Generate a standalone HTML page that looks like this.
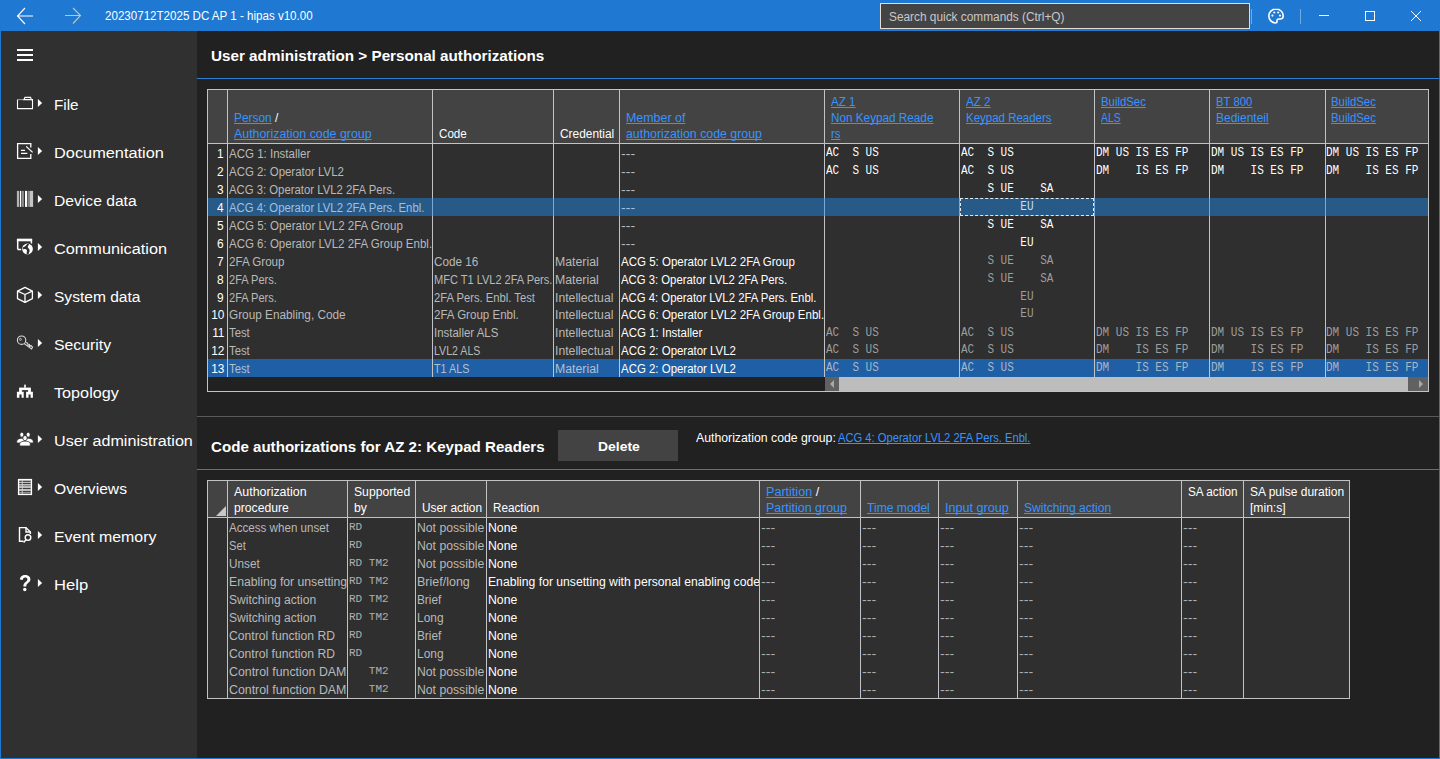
<!DOCTYPE html>
<html><head><meta charset="utf-8"><style>
html,body{margin:0;padding:0;width:1440px;height:759px;overflow:hidden;background:#212121}
body{position:relative;font-family:'Liberation Sans', sans-serif}
</style></head><body>
<div style="position:absolute;left:0;top:0;width:1440px;height:759px;background:#1f78d1"></div><div style="position:absolute;left:1px;top:31px;width:196px;height:727px;background:#303030;"></div><div style="position:absolute;left:197px;top:31px;width:1242px;height:727px;background:#212121;"></div><svg style="position:absolute;left:0;top:0" width="1440" height="31">
<g fill="none" stroke="#fff" stroke-width="1.1">
<path d="M17.5 16 H33 M25 8 L17.5 16 L25 24"/>
</g>
<g fill="none" stroke="#c9c3bb" stroke-width="1.1">
<path d="M65 15.5 H81 M73 8 L80.5 15.5 L73 23.5"/>
</g>
<line x1="1251.5" y1="9" x2="1251.5" y2="24" stroke="#6fa9e6" stroke-width="1"/>
<line x1="1300.5" y1="9" x2="1300.5" y2="24" stroke="#6fa9e6" stroke-width="1"/>
<line x1="1319" y1="15.5" x2="1329" y2="15.5" stroke="#fff" stroke-width="1"/>
<rect x="1365.5" y="11.5" width="9" height="9" fill="none" stroke="#fff" stroke-width="1"/>
<path d="M1411 11 L1421 21 M1421 11 L1411 21" stroke="#fff" stroke-width="1"/>
<g transform="translate(1268,8)">
<path d="M8 1 C3.8 1 0.8 4.2 0.8 8 C0.8 11.8 4 15 7.4 15 C8.6 15 9.2 14.3 9 13.2 C8.8 12 9.3 11 10.8 11 L12.2 11 C14 11 15.2 9.7 15.2 8 C15.2 4 12.2 1 8 1 Z" fill="none" stroke="#fff" stroke-width="1.6"/>
<circle cx="4.4" cy="7.6" r="1.1" fill="#fff"/><circle cx="6.3" cy="4.5" r="1.1" fill="#fff"/><circle cx="10.2" cy="4.5" r="1.1" fill="#fff"/><circle cx="12" cy="7.6" r="1.1" fill="#fff"/>
</g>
</svg><div style="position:absolute;top:9.00px;line-height:14px;font-family:'Liberation Sans', sans-serif;font-size:12px;font-weight:normal;color:#fff;white-space:pre;transform:scaleX(0.9646);transform-origin:left 0;left:105px;">20230712T2025 DC AP 1 - hipas v10.00</div><div style="position:absolute;left:880px;top:3px;width:370px;height:26px;background:#444444;box-sizing:border-box;border:1px solid #e2ddd3"></div><div style="position:absolute;top:10.00px;line-height:14px;font-family:'Liberation Sans', sans-serif;font-size:12px;font-weight:normal;color:#c8c8c8;white-space:pre;transform:scaleX(0.9875);transform-origin:left 0;left:889px;">Search quick commands (Ctrl+Q)</div><svg style="position:absolute;left:0;top:0" width="197" height="759"><g fill="#fff"><rect x="17" y="49" width="16" height="2"/><rect x="17" y="54" width="16" height="2"/><rect x="17" y="59" width="16" height="2"/></g><g transform="translate(12,90)"><g fill="none" stroke="#fff" stroke-width="1.1"><path d="M5.5 9.6 V18.6 H20.5 V9.6 H19.3"/><path d="M5.5 9.6 H12" stroke="#9a9a9a"/><path d="M12 9.6 L13 7.4 H18.6 L19.3 9.6 Z"/></g></g><path d="M37.9 99 L42.1 103 L37.9 107 Z" fill="#fff"/><g transform="translate(12,138)"><g fill="none" stroke="#fff" stroke-width="1.3"><path d="M18.8 9.6 V5.6 H5.6 V20.3 H18.8 V16"/><path d="M9 12.3 H13 M9 15.4 H15.3"/><path d="M14.2 8.4 L20.6 14.4"/></g></g><path d="M37.9 147 L42.1 151 L37.9 155 Z" fill="#fff"/><g transform="translate(12,186)"><g><rect x="4.9" y="4.9" width="2.2" height="16" fill="#b4b4b4"/><rect x="7.9" y="4.9" width="1.3" height="16" fill="#fff"/><rect x="9.6" y="4.9" width="2.3" height="16" fill="#8c8c8c"/><rect x="13" y="4.9" width="2.1" height="16" fill="#fff"/><rect x="15.6" y="4.9" width="2.4" height="16" fill="#858585"/><rect x="18" y="4.9" width="3.1" height="16" fill="#c4c4c4"/></g></g><path d="M37.9 195 L42.1 199 L37.9 203 Z" fill="#fff"/><g transform="translate(12,234)"><g><path d="M5.7 15.4 V5.6 H19.4 V9.5 M5.7 15.4 H9.6" fill="none" stroke="#fff" stroke-width="1.5"/><rect x="4.9" y="4.9" width="15.2" height="2.4" fill="#fff"/><circle cx="15.5" cy="15" r="6.4" fill="#303030"/><circle cx="15.5" cy="15" r="5.4" fill="#fff"/><path d="M15.2 9.7 C14.6 11.2 13.2 12.4 10.8 13.4 L10.9 15.4 C12.6 14.8 14.2 14.9 14.8 16 C15.3 17 14.4 18.6 14.6 20.3 L16.6 20.2 C16.9 18.6 17.9 17.4 17.5 15.8 C17.2 14.7 16 14.3 15.8 13.1 C15.7 12.2 16.5 11.2 17.4 10.6 Z" fill="#303030"/></g></g><path d="M37.9 243 L42.1 247 L37.9 251 Z" fill="#fff"/><g transform="translate(12,282)"><g fill="none" stroke="#fff" stroke-width="1.3" stroke-linejoin="round"><path d="M13 5.3 L20.4 9.1 V16.7 L13 20.4 L5.5 16.7 V9.1 Z"/><path d="M5.5 9.1 L13 12.5 L20.4 9.1 M13 12.5 V20.4"/></g></g><path d="M37.9 291 L42.1 295 L37.9 299 Z" fill="#fff"/><g transform="translate(12,330)"><g fill="none" stroke="#dcdcdc" stroke-width="1.1"><circle cx="9.6" cy="10.2" r="4.2"/><path d="M12.2 13.6 L19.6 19 L20.5 17.2 L19 15.6 L17.8 16.6 L17.4 14.6 L16.2 15.2 L15.6 13.2 L13.8 12.6"/><circle cx="8.4" cy="9.4" r="1" stroke-width="0.8"/></g></g><path d="M37.9 339 L42.1 343 L37.9 347 Z" fill="#fff"/><g transform="translate(12,378)"><g fill="#fff"><rect x="12.2" y="6.6" width="1.6" height="3.2"/><rect x="7.1" y="9.6" width="11.8" height="2.5"/><rect x="7.1" y="12" width="2.8" height="2"/><rect x="16.1" y="12" width="2.8" height="2"/><path d="M4.9 13.8 H11.7 V19.8 H9.6 V16.6 H7.4 V19.8 H4.9 Z"/><path d="M14.1 13.8 H20.9 V19.8 H18.6 V16.6 H16.5 V19.8 H14.1 Z"/></g></g><g transform="translate(12,426)"><g fill="#fff" stroke="#303030" stroke-width="0.8"><ellipse cx="9.8" cy="8.7" rx="2" ry="2.5"/><path d="M4.7 17 V15.4 C4.7 13.4 7 12.3 9.8 12.2 C11.6 12.2 12.6 12.6 13.2 13.3 V17 Z"/><ellipse cx="16.2" cy="8.7" rx="2" ry="2.5"/><path d="M21.3 17 V15.4 C21.3 13.4 19 12.3 16.2 12.2 C14.4 12.2 13.4 12.6 12.8 13.3 V17 Z"/><path d="M7.7 20 V17.8 C7.7 16.1 10.1 15.1 13 15.1 C15.9 15.1 18.3 16.1 18.3 17.8 V20 Z"/><ellipse cx="13" cy="12.1" rx="2.2" ry="2.6"/></g></g><path d="M37.9 435 L42.1 439 L37.9 443 Z" fill="#fff"/><g transform="translate(12,474)"><g><rect x="6.5" y="5.5" width="13" height="15" fill="#bdbdbd" stroke="#fff" stroke-width="1.2"/><g fill="#303030"><rect x="7.4" y="6.9" width="11.2" height="0.9"/><rect x="7.4" y="9.1" width="11.2" height="0.9"/><rect x="7.4" y="11.4" width="11.2" height="0.7" opacity="0.6"/><rect x="7.4" y="14" width="11.2" height="0.9"/><rect x="7.4" y="17.1" width="11.2" height="0.9"/><rect x="7.4" y="18.7" width="11.2" height="0.8"/></g><rect x="9.8" y="6" width="0.9" height="14" fill="#d0d0d0"/></g></g><path d="M37.9 483 L42.1 487 L37.9 491 Z" fill="#fff"/><g transform="translate(12,522)"><g fill="none" stroke="#fff" stroke-width="1.4"><path d="M11.5 19.2 H7.5 V5.6 H14 L18.4 10 V12"/><path d="M14 5.6 V10 H18.4"/><circle cx="16" cy="15.6" r="2.8"/><path d="M14 17.8 L11.6 20.4" stroke-width="1.5"/></g></g><path d="M37.9 531 L42.1 535 L37.9 539 Z" fill="#fff"/><g transform="translate(12,570)"><g fill="#fff"><path d="M7.9 9.6 C7.9 6.6 10.2 4.9 13.1 4.9 C16.2 4.9 18.4 6.6 18.4 9.3 C18.4 11.4 17 12.4 15.6 13.4 C14.6 14.1 14.3 14.8 14.3 16.4 H11.4 C11.4 14.3 11.9 13.1 13.5 11.9 C14.7 11 15.4 10.5 15.4 9.4 C15.4 8.2 14.5 7.6 13.1 7.6 C11.7 7.6 10.9 8.5 10.8 9.9 Z"/><circle cx="12.8" cy="19.5" r="1.7"/></g></g><path d="M37.9 579 L42.1 583 L37.9 587 Z" fill="#fff"/></svg><div style="position:absolute;top:96.00px;line-height:17px;font-family:'Liberation Sans', sans-serif;font-size:15.4px;font-weight:normal;color:#fff;white-space:pre;transform:scaleX(0.9914);transform-origin:left 0;left:54px;">File</div><div style="position:absolute;top:144.00px;line-height:17px;font-family:'Liberation Sans', sans-serif;font-size:15.4px;font-weight:normal;color:#fff;white-space:pre;transform:scaleX(1.0620);transform-origin:left 0;left:54px;">Documentation</div><div style="position:absolute;top:192.00px;line-height:17px;font-family:'Liberation Sans', sans-serif;font-size:15.4px;font-weight:normal;color:#fff;white-space:pre;transform:scaleX(1.0169);transform-origin:left 0;left:54px;">Device data</div><div style="position:absolute;top:240.00px;line-height:17px;font-family:'Liberation Sans', sans-serif;font-size:15.4px;font-weight:normal;color:#fff;white-space:pre;transform:scaleX(1.0571);transform-origin:left 0;left:54px;">Communication</div><div style="position:absolute;top:288.00px;line-height:17px;font-family:'Liberation Sans', sans-serif;font-size:15.4px;font-weight:normal;color:#fff;white-space:pre;transform:scaleX(1.0106);transform-origin:left 0;left:54px;">System data</div><div style="position:absolute;top:336.00px;line-height:17px;font-family:'Liberation Sans', sans-serif;font-size:15.4px;font-weight:normal;color:#fff;white-space:pre;transform:scaleX(1.0282);transform-origin:left 0;left:54px;">Security</div><div style="position:absolute;top:384.00px;line-height:17px;font-family:'Liberation Sans', sans-serif;font-size:15.4px;font-weight:normal;color:#fff;white-space:pre;transform:scaleX(1.0528);transform-origin:left 0;left:54px;">Topology</div><div style="position:absolute;top:432.00px;line-height:17px;font-family:'Liberation Sans', sans-serif;font-size:15.4px;font-weight:normal;color:#fff;white-space:pre;transform:scaleX(1.0470);transform-origin:left 0;left:54px;">User administration</div><div style="position:absolute;top:480.00px;line-height:17px;font-family:'Liberation Sans', sans-serif;font-size:15.4px;font-weight:normal;color:#fff;white-space:pre;transform:scaleX(1.0156);transform-origin:left 0;left:54px;">Overviews</div><div style="position:absolute;top:528.00px;line-height:17px;font-family:'Liberation Sans', sans-serif;font-size:15.4px;font-weight:normal;color:#fff;white-space:pre;transform:scaleX(1.0325);transform-origin:left 0;left:54px;">Event memory</div><div style="position:absolute;top:576.00px;line-height:17px;font-family:'Liberation Sans', sans-serif;font-size:15.4px;font-weight:normal;color:#fff;white-space:pre;transform:scaleX(1.0798);transform-origin:left 0;left:54px;">Help</div><div style="position:absolute;top:47.00px;line-height:17px;font-family:'Liberation Sans', sans-serif;font-size:15.2px;font-weight:bold;color:#fff;white-space:pre;transform:scaleX(1.0034);transform-origin:left 0;left:211px;">User administration &gt; Personal authorizations</div><div style="position:absolute;left:197px;top:78px;width:1242px;height:1px;background:#2d7dd2;"></div><div style="position:absolute;left:207px;top:89px;width:1222px;height:303px;background:#c3c3c3;"></div><div style="position:absolute;left:208px;top:90px;width:1220px;height:53px;background:#434343;"></div><div style="position:absolute;left:208px;top:144px;width:1220px;height:233px;background:#2f2f2f;"></div><div style="position:absolute;left:208px;top:377px;width:617px;height:14px;background:#212121;"></div><div style="position:absolute;left:839px;top:377px;width:569px;height:14px;background:#bdbdbd;"></div><div style="position:absolute;left:825px;top:377px;width:14px;height:14px;background:#616161;"></div><div style="position:absolute;left:1408px;top:377px;width:20px;height:14px;background:#616161;"></div><svg style="position:absolute;left:825px;top:377px" width="14" height="14"><path d="M9 3 L5 7 L9 11 Z" fill="#a9a9a9"/></svg><svg style="position:absolute;left:1408px;top:377px" width="20" height="14"><path d="M11 3 L15 7 L11 11 Z" fill="#a9a9a9"/></svg><div style="position:absolute;left:208px;top:198px;width:1220px;height:18px;background:#285a87;"></div><div style="position:absolute;left:208px;top:359px;width:1220px;height:18px;background:#1f5fa6;"></div><div style="position:absolute;left:227px;top:90px;width:1px;height:287px;background:#c3c3c3;"></div><div style="position:absolute;left:432px;top:90px;width:1px;height:287px;background:#c3c3c3;"></div><div style="position:absolute;left:553px;top:90px;width:1px;height:287px;background:#c3c3c3;"></div><div style="position:absolute;left:619px;top:90px;width:1px;height:287px;background:#c3c3c3;"></div><div style="position:absolute;left:824px;top:90px;width:1px;height:287px;background:#c3c3c3;"></div><div style="position:absolute;left:959px;top:90px;width:1px;height:287px;background:#c3c3c3;"></div><div style="position:absolute;left:1094px;top:90px;width:1px;height:287px;background:#c3c3c3;"></div><div style="position:absolute;left:1209px;top:90px;width:1px;height:287px;background:#c3c3c3;"></div><div style="position:absolute;left:1325px;top:90px;width:1px;height:287px;background:#c3c3c3;"></div><div style="position:absolute;left:227px;top:198px;width:1px;height:18px;background:#78a9dc;"></div><div style="position:absolute;left:432px;top:198px;width:1px;height:18px;background:#78a9dc;"></div><div style="position:absolute;left:553px;top:198px;width:1px;height:18px;background:#78a9dc;"></div><div style="position:absolute;left:619px;top:198px;width:1px;height:18px;background:#78a9dc;"></div><div style="position:absolute;left:824px;top:198px;width:1px;height:18px;background:#78a9dc;"></div><div style="position:absolute;left:959px;top:198px;width:1px;height:18px;background:#78a9dc;"></div><div style="position:absolute;left:1094px;top:198px;width:1px;height:18px;background:#78a9dc;"></div><div style="position:absolute;left:1209px;top:198px;width:1px;height:18px;background:#78a9dc;"></div><div style="position:absolute;left:1325px;top:198px;width:1px;height:18px;background:#78a9dc;"></div><div style="position:absolute;left:960px;top:198px;width:134px;height:18px;box-sizing:border-box;border:1px dashed #e8e8e8"></div><div style="position:absolute;top:111.00px;line-height:14px;font-family:'Liberation Sans', sans-serif;font-size:12px;font-weight:normal;color:#fff;white-space:pre;transform:scaleX(0.9911);transform-origin:left 0;left:234px;"><span style="color:#3794ff;text-decoration:underline;text-decoration-skip-ink:none;text-underline-offset:1px">Person</span> /</div><div style="position:absolute;top:127.00px;line-height:14px;font-family:'Liberation Sans', sans-serif;font-size:12px;font-weight:normal;color:#fff;white-space:pre;transform:scaleX(1.0310);transform-origin:left 0;left:234px;"><span style="color:#3794ff;text-decoration:underline;text-decoration-skip-ink:none;text-underline-offset:1px">Authorization code group</span></div><div style="position:absolute;top:127.00px;line-height:14px;font-family:'Liberation Sans', sans-serif;font-size:12px;font-weight:normal;color:#fff;white-space:pre;transform:scaleX(0.9667);transform-origin:left 0;left:439px;">Code</div><div style="position:absolute;top:127.00px;line-height:14px;font-family:'Liberation Sans', sans-serif;font-size:12px;font-weight:normal;color:#fff;white-space:pre;transform:scaleX(0.9910);transform-origin:left 0;left:560px;">Credential</div><div style="position:absolute;top:111.00px;line-height:14px;font-family:'Liberation Sans', sans-serif;font-size:12px;font-weight:normal;color:#fff;white-space:pre;transform:scaleX(1.0349);transform-origin:left 0;left:626px;"><span style="color:#3794ff;text-decoration:underline;text-decoration-skip-ink:none;text-underline-offset:1px">Member of</span></div><div style="position:absolute;top:127.00px;line-height:14px;font-family:'Liberation Sans', sans-serif;font-size:12px;font-weight:normal;color:#fff;white-space:pre;transform:scaleX(1.0293);transform-origin:left 0;left:626px;"><span style="color:#3794ff;text-decoration:underline;text-decoration-skip-ink:none;text-underline-offset:1px">authorization code group</span></div><div style="position:absolute;top:95.00px;line-height:14px;font-family:'Liberation Sans', sans-serif;font-size:12px;font-weight:normal;color:#fff;white-space:pre;transform:scaleX(0.9693);transform-origin:left 0;left:831px;"><span style="color:#3794ff;text-decoration:underline;text-decoration-skip-ink:none;text-underline-offset:1px">AZ 1</span></div><div style="position:absolute;top:111.00px;line-height:14px;font-family:'Liberation Sans', sans-serif;font-size:12px;font-weight:normal;color:#fff;white-space:pre;transform:scaleX(0.9779);transform-origin:left 0;left:831px;"><span style="color:#3794ff;text-decoration:underline;text-decoration-skip-ink:none;text-underline-offset:1px">Non Keypad Reade</span></div><div style="position:absolute;top:127.00px;line-height:14px;font-family:'Liberation Sans', sans-serif;font-size:12px;font-weight:normal;color:#fff;white-space:pre;transform:scaleX(0.9388);transform-origin:left 0;left:831px;"><span style="color:#3794ff;text-decoration:underline;text-decoration-skip-ink:none;text-underline-offset:1px">rs</span></div><div style="position:absolute;top:95.00px;line-height:14px;font-family:'Liberation Sans', sans-serif;font-size:12px;font-weight:normal;color:#fff;white-space:pre;transform:scaleX(0.9693);transform-origin:left 0;left:966px;"><span style="color:#3794ff;text-decoration:underline;text-decoration-skip-ink:none;text-underline-offset:1px">AZ 2</span></div><div style="position:absolute;top:111.00px;line-height:14px;font-family:'Liberation Sans', sans-serif;font-size:12px;font-weight:normal;color:#fff;white-space:pre;transform:scaleX(0.9573);transform-origin:left 0;left:966px;"><span style="color:#3794ff;text-decoration:underline;text-decoration-skip-ink:none;text-underline-offset:1px">Keypad Readers</span></div><div style="position:absolute;top:95.00px;line-height:14px;font-family:'Liberation Sans', sans-serif;font-size:12px;font-weight:normal;color:#fff;white-space:pre;transform:scaleX(0.9461);transform-origin:left 0;left:1101px;"><span style="color:#3794ff;text-decoration:underline;text-decoration-skip-ink:none;text-underline-offset:1px">BuildSec</span></div><div style="position:absolute;top:111.00px;line-height:14px;font-family:'Liberation Sans', sans-serif;font-size:12px;font-weight:normal;color:#fff;white-space:pre;transform:scaleX(0.8640);transform-origin:left 0;left:1101px;"><span style="color:#3794ff;text-decoration:underline;text-decoration-skip-ink:none;text-underline-offset:1px">ALS</span></div><div style="position:absolute;top:95.00px;line-height:14px;font-family:'Liberation Sans', sans-serif;font-size:12px;font-weight:normal;color:#fff;white-space:pre;transform:scaleX(0.9417);transform-origin:left 0;left:1216px;"><span style="color:#3794ff;text-decoration:underline;text-decoration-skip-ink:none;text-underline-offset:1px">BT 800</span></div><div style="position:absolute;top:111.00px;line-height:14px;font-family:'Liberation Sans', sans-serif;font-size:12px;font-weight:normal;color:#fff;white-space:pre;left:1216px;"><span style="color:#3794ff;text-decoration:underline;text-decoration-skip-ink:none;text-underline-offset:1px">Bedienteil</span></div><div style="position:absolute;top:95.00px;line-height:14px;font-family:'Liberation Sans', sans-serif;font-size:12px;font-weight:normal;color:#fff;white-space:pre;transform:scaleX(0.9461);transform-origin:left 0;left:1331px;"><span style="color:#3794ff;text-decoration:underline;text-decoration-skip-ink:none;text-underline-offset:1px">BuildSec</span></div><div style="position:absolute;top:111.00px;line-height:14px;font-family:'Liberation Sans', sans-serif;font-size:12px;font-weight:normal;color:#fff;white-space:pre;transform:scaleX(0.9461);transform-origin:left 0;left:1331px;"><span style="color:#3794ff;text-decoration:underline;text-decoration-skip-ink:none;text-underline-offset:1px">BuildSec</span></div><div style="position:absolute;top:147.00px;line-height:14px;font-family:'Liberation Sans', sans-serif;font-size:12px;font-weight:normal;color:#fff;white-space:pre;transform:scaleX(0.9889);transform-origin:right 0;right:1216px;">1</div><div style="position:absolute;left:228px;top:0;width:204px;height:759px;overflow:hidden"><div style="position:absolute;top:147.00px;line-height:14px;font-family:'Liberation Sans', sans-serif;font-size:12px;font-weight:normal;color:#b9b9b9;white-space:pre;transform:scaleX(0.9596);transform-origin:left 0;left:1px;">ACG 1: Installer</div></div><div style="position:absolute;left:433px;top:0;width:120px;height:759px;overflow:hidden"><div style="position:absolute;top:147.00px;line-height:14px;font-family:'Liberation Sans', sans-serif;font-size:12px;font-weight:normal;color:#b9b9b9;white-space:pre;left:1px;"></div></div><div style="position:absolute;left:554px;top:0;width:65px;height:759px;overflow:hidden"><div style="position:absolute;top:147.00px;line-height:14px;font-family:'Liberation Sans', sans-serif;font-size:12px;font-weight:normal;color:#b9b9b9;white-space:pre;left:1px;"></div></div><div style="position:absolute;top:147.00px;line-height:14px;font-family:'Liberation Sans', sans-serif;font-size:12px;font-weight:normal;color:#b9b9b9;white-space:pre;transform:scaleX(1.1862);transform-origin:left 0;left:621px;">---</div><div style="position:absolute;top:146.00px;line-height:14px;font-family:'Liberation Mono', monospace;font-size:11.9px;font-weight:normal;color:#ffffff;white-space:pre;transform:scaleX(0.9244);transform-origin:left 0;left:826px;">AC  S US</div><div style="position:absolute;top:146.00px;line-height:14px;font-family:'Liberation Mono', monospace;font-size:11.9px;font-weight:normal;color:#ffffff;white-space:pre;transform:scaleX(0.9244);transform-origin:left 0;left:961px;">AC  S US</div><div style="position:absolute;top:146.00px;line-height:14px;font-family:'Liberation Mono', monospace;font-size:11.9px;font-weight:normal;color:#ffffff;white-space:pre;transform:scaleX(0.9244);transform-origin:left 0;left:1096px;">DM US IS ES FP</div><div style="position:absolute;top:146.00px;line-height:14px;font-family:'Liberation Mono', monospace;font-size:11.9px;font-weight:normal;color:#ffffff;white-space:pre;transform:scaleX(0.9244);transform-origin:left 0;left:1211px;">DM US IS ES FP</div><div style="position:absolute;top:146.00px;line-height:14px;font-family:'Liberation Mono', monospace;font-size:11.9px;font-weight:normal;color:#ffffff;white-space:pre;transform:scaleX(0.9244);transform-origin:left 0;left:1326px;">DM US IS ES FP</div><div style="position:absolute;top:165.00px;line-height:14px;font-family:'Liberation Sans', sans-serif;font-size:12px;font-weight:normal;color:#fff;white-space:pre;transform:scaleX(0.9889);transform-origin:right 0;right:1216px;">2</div><div style="position:absolute;left:228px;top:0;width:204px;height:759px;overflow:hidden"><div style="position:absolute;top:165.00px;line-height:14px;font-family:'Liberation Sans', sans-serif;font-size:12px;font-weight:normal;color:#b9b9b9;white-space:pre;transform:scaleX(0.9541);transform-origin:left 0;left:1px;">ACG 2: Operator LVL2</div></div><div style="position:absolute;left:433px;top:0;width:120px;height:759px;overflow:hidden"><div style="position:absolute;top:165.00px;line-height:14px;font-family:'Liberation Sans', sans-serif;font-size:12px;font-weight:normal;color:#b9b9b9;white-space:pre;left:1px;"></div></div><div style="position:absolute;left:554px;top:0;width:65px;height:759px;overflow:hidden"><div style="position:absolute;top:165.00px;line-height:14px;font-family:'Liberation Sans', sans-serif;font-size:12px;font-weight:normal;color:#b9b9b9;white-space:pre;left:1px;"></div></div><div style="position:absolute;top:165.00px;line-height:14px;font-family:'Liberation Sans', sans-serif;font-size:12px;font-weight:normal;color:#b9b9b9;white-space:pre;transform:scaleX(1.1862);transform-origin:left 0;left:621px;">---</div><div style="position:absolute;top:164.00px;line-height:14px;font-family:'Liberation Mono', monospace;font-size:11.9px;font-weight:normal;color:#ffffff;white-space:pre;transform:scaleX(0.9244);transform-origin:left 0;left:826px;">AC  S US</div><div style="position:absolute;top:164.00px;line-height:14px;font-family:'Liberation Mono', monospace;font-size:11.9px;font-weight:normal;color:#ffffff;white-space:pre;transform:scaleX(0.9244);transform-origin:left 0;left:961px;">AC  S US</div><div style="position:absolute;top:164.00px;line-height:14px;font-family:'Liberation Mono', monospace;font-size:11.9px;font-weight:normal;color:#ffffff;white-space:pre;transform:scaleX(0.9244);transform-origin:left 0;left:1096px;">DM    IS ES FP</div><div style="position:absolute;top:164.00px;line-height:14px;font-family:'Liberation Mono', monospace;font-size:11.9px;font-weight:normal;color:#ffffff;white-space:pre;transform:scaleX(0.9244);transform-origin:left 0;left:1211px;">DM    IS ES FP</div><div style="position:absolute;top:164.00px;line-height:14px;font-family:'Liberation Mono', monospace;font-size:11.9px;font-weight:normal;color:#ffffff;white-space:pre;transform:scaleX(0.9244);transform-origin:left 0;left:1326px;">DM    IS ES FP</div><div style="position:absolute;top:183.00px;line-height:14px;font-family:'Liberation Sans', sans-serif;font-size:12px;font-weight:normal;color:#fff;white-space:pre;transform:scaleX(0.9889);transform-origin:right 0;right:1216px;">3</div><div style="position:absolute;left:228px;top:0;width:204px;height:759px;overflow:hidden"><div style="position:absolute;top:183.00px;line-height:14px;font-family:'Liberation Sans', sans-serif;font-size:12px;font-weight:normal;color:#b9b9b9;white-space:pre;transform:scaleX(0.9444);transform-origin:left 0;left:1px;">ACG 3: Operator LVL2 2FA Pers.</div></div><div style="position:absolute;left:433px;top:0;width:120px;height:759px;overflow:hidden"><div style="position:absolute;top:183.00px;line-height:14px;font-family:'Liberation Sans', sans-serif;font-size:12px;font-weight:normal;color:#b9b9b9;white-space:pre;left:1px;"></div></div><div style="position:absolute;left:554px;top:0;width:65px;height:759px;overflow:hidden"><div style="position:absolute;top:183.00px;line-height:14px;font-family:'Liberation Sans', sans-serif;font-size:12px;font-weight:normal;color:#b9b9b9;white-space:pre;left:1px;"></div></div><div style="position:absolute;top:183.00px;line-height:14px;font-family:'Liberation Sans', sans-serif;font-size:12px;font-weight:normal;color:#b9b9b9;white-space:pre;transform:scaleX(1.1862);transform-origin:left 0;left:621px;">---</div><div style="position:absolute;top:182.00px;line-height:14px;font-family:'Liberation Mono', monospace;font-size:11.9px;font-weight:normal;color:#ffffff;white-space:pre;transform:scaleX(0.9244);transform-origin:left 0;left:961px;">    S UE    SA</div><div style="position:absolute;top:201.00px;line-height:14px;font-family:'Liberation Sans', sans-serif;font-size:12px;font-weight:normal;color:#fff;white-space:pre;transform:scaleX(0.9889);transform-origin:right 0;right:1216px;">4</div><div style="position:absolute;left:228px;top:0;width:204px;height:759px;overflow:hidden"><div style="position:absolute;top:201.00px;line-height:14px;font-family:'Liberation Sans', sans-serif;font-size:12px;font-weight:normal;color:#9cc0e4;white-space:pre;transform:scaleX(0.9459);transform-origin:left 0;left:1px;">ACG 4: Operator LVL2 2FA Pers. Enbl.</div></div><div style="position:absolute;left:433px;top:0;width:120px;height:759px;overflow:hidden"><div style="position:absolute;top:201.00px;line-height:14px;font-family:'Liberation Sans', sans-serif;font-size:12px;font-weight:normal;color:#9cc0e4;white-space:pre;left:1px;"></div></div><div style="position:absolute;left:554px;top:0;width:65px;height:759px;overflow:hidden"><div style="position:absolute;top:201.00px;line-height:14px;font-family:'Liberation Sans', sans-serif;font-size:12px;font-weight:normal;color:#9cc0e4;white-space:pre;left:1px;"></div></div><div style="position:absolute;top:201.00px;line-height:14px;font-family:'Liberation Sans', sans-serif;font-size:12px;font-weight:normal;color:#9cc0e4;white-space:pre;transform:scaleX(1.1862);transform-origin:left 0;left:621px;">---</div><div style="position:absolute;top:200.00px;line-height:14px;font-family:'Liberation Mono', monospace;font-size:11.9px;font-weight:normal;color:#c8dcf0;white-space:pre;transform:scaleX(0.9244);transform-origin:left 0;left:961px;">         EU</div><div style="position:absolute;top:219.00px;line-height:14px;font-family:'Liberation Sans', sans-serif;font-size:12px;font-weight:normal;color:#fff;white-space:pre;transform:scaleX(0.9889);transform-origin:right 0;right:1216px;">5</div><div style="position:absolute;left:228px;top:0;width:204px;height:759px;overflow:hidden"><div style="position:absolute;top:219.00px;line-height:14px;font-family:'Liberation Sans', sans-serif;font-size:12px;font-weight:normal;color:#b9b9b9;white-space:pre;transform:scaleX(0.9590);transform-origin:left 0;left:1px;">ACG 5: Operator LVL2 2FA Group</div></div><div style="position:absolute;left:433px;top:0;width:120px;height:759px;overflow:hidden"><div style="position:absolute;top:219.00px;line-height:14px;font-family:'Liberation Sans', sans-serif;font-size:12px;font-weight:normal;color:#b9b9b9;white-space:pre;left:1px;"></div></div><div style="position:absolute;left:554px;top:0;width:65px;height:759px;overflow:hidden"><div style="position:absolute;top:219.00px;line-height:14px;font-family:'Liberation Sans', sans-serif;font-size:12px;font-weight:normal;color:#b9b9b9;white-space:pre;left:1px;"></div></div><div style="position:absolute;top:219.00px;line-height:14px;font-family:'Liberation Sans', sans-serif;font-size:12px;font-weight:normal;color:#b9b9b9;white-space:pre;transform:scaleX(1.1862);transform-origin:left 0;left:621px;">---</div><div style="position:absolute;top:218.00px;line-height:14px;font-family:'Liberation Mono', monospace;font-size:11.9px;font-weight:normal;color:#ffffff;white-space:pre;transform:scaleX(0.9244);transform-origin:left 0;left:961px;">    S UE    SA</div><div style="position:absolute;top:237.00px;line-height:14px;font-family:'Liberation Sans', sans-serif;font-size:12px;font-weight:normal;color:#fff;white-space:pre;transform:scaleX(0.9889);transform-origin:right 0;right:1216px;">6</div><div style="position:absolute;left:228px;top:0;width:204px;height:759px;overflow:hidden"><div style="position:absolute;top:237.00px;line-height:14px;font-family:'Liberation Sans', sans-serif;font-size:12px;font-weight:normal;color:#b9b9b9;white-space:pre;transform:scaleX(0.9584);transform-origin:left 0;left:1px;">ACG 6: Operator LVL2 2FA Group Enbl.</div></div><div style="position:absolute;left:433px;top:0;width:120px;height:759px;overflow:hidden"><div style="position:absolute;top:237.00px;line-height:14px;font-family:'Liberation Sans', sans-serif;font-size:12px;font-weight:normal;color:#b9b9b9;white-space:pre;left:1px;"></div></div><div style="position:absolute;left:554px;top:0;width:65px;height:759px;overflow:hidden"><div style="position:absolute;top:237.00px;line-height:14px;font-family:'Liberation Sans', sans-serif;font-size:12px;font-weight:normal;color:#b9b9b9;white-space:pre;left:1px;"></div></div><div style="position:absolute;top:237.00px;line-height:14px;font-family:'Liberation Sans', sans-serif;font-size:12px;font-weight:normal;color:#b9b9b9;white-space:pre;transform:scaleX(1.1862);transform-origin:left 0;left:621px;">---</div><div style="position:absolute;top:236.00px;line-height:14px;font-family:'Liberation Mono', monospace;font-size:11.9px;font-weight:normal;color:#ffffff;white-space:pre;transform:scaleX(0.9244);transform-origin:left 0;left:961px;">         EU</div><div style="position:absolute;top:255.00px;line-height:14px;font-family:'Liberation Sans', sans-serif;font-size:12px;font-weight:normal;color:#fff;white-space:pre;transform:scaleX(0.9889);transform-origin:right 0;right:1216px;">7</div><div style="position:absolute;left:228px;top:0;width:204px;height:759px;overflow:hidden"><div style="position:absolute;top:255.00px;line-height:14px;font-family:'Liberation Sans', sans-serif;font-size:12px;font-weight:normal;color:#b9b9b9;white-space:pre;transform:scaleX(0.9677);transform-origin:left 0;left:1px;">2FA Group</div></div><div style="position:absolute;left:433px;top:0;width:120px;height:759px;overflow:hidden"><div style="position:absolute;top:255.00px;line-height:14px;font-family:'Liberation Sans', sans-serif;font-size:12px;font-weight:normal;color:#b9b9b9;white-space:pre;transform:scaleX(0.9747);transform-origin:left 0;left:1px;">Code 16</div></div><div style="position:absolute;left:554px;top:0;width:65px;height:759px;overflow:hidden"><div style="position:absolute;top:255.00px;line-height:14px;font-family:'Liberation Sans', sans-serif;font-size:12px;font-weight:normal;color:#b9b9b9;white-space:pre;transform:scaleX(1.0240);transform-origin:left 0;left:1px;">Material</div></div><div style="position:absolute;left:620px;top:0;width:204px;height:759px;overflow:hidden"><div style="position:absolute;top:255.00px;line-height:14px;font-family:'Liberation Sans', sans-serif;font-size:12px;font-weight:normal;color:#fff;white-space:pre;transform:scaleX(0.9590);transform-origin:left 0;left:1px;">ACG 5: Operator LVL2 2FA Group</div></div><div style="position:absolute;top:254.00px;line-height:14px;font-family:'Liberation Mono', monospace;font-size:11.9px;font-weight:normal;color:#9e9e9e;white-space:pre;transform:scaleX(0.9244);transform-origin:left 0;left:961px;">    S UE    SA</div><div style="position:absolute;top:273.00px;line-height:14px;font-family:'Liberation Sans', sans-serif;font-size:12px;font-weight:normal;color:#fff;white-space:pre;transform:scaleX(0.9889);transform-origin:right 0;right:1216px;">8</div><div style="position:absolute;left:228px;top:0;width:204px;height:759px;overflow:hidden"><div style="position:absolute;top:273.00px;line-height:14px;font-family:'Liberation Sans', sans-serif;font-size:12px;font-weight:normal;color:#b9b9b9;white-space:pre;transform:scaleX(0.9197);transform-origin:left 0;left:1px;">2FA Pers.</div></div><div style="position:absolute;left:433px;top:0;width:120px;height:759px;overflow:hidden"><div style="position:absolute;top:273.00px;line-height:14px;font-family:'Liberation Sans', sans-serif;font-size:12px;font-weight:normal;color:#b9b9b9;white-space:pre;transform:scaleX(0.9178);transform-origin:left 0;left:1px;">MFC T1 LVL2 2FA Pers.</div></div><div style="position:absolute;left:554px;top:0;width:65px;height:759px;overflow:hidden"><div style="position:absolute;top:273.00px;line-height:14px;font-family:'Liberation Sans', sans-serif;font-size:12px;font-weight:normal;color:#b9b9b9;white-space:pre;transform:scaleX(1.0240);transform-origin:left 0;left:1px;">Material</div></div><div style="position:absolute;left:620px;top:0;width:204px;height:759px;overflow:hidden"><div style="position:absolute;top:273.00px;line-height:14px;font-family:'Liberation Sans', sans-serif;font-size:12px;font-weight:normal;color:#fff;white-space:pre;transform:scaleX(0.9444);transform-origin:left 0;left:1px;">ACG 3: Operator LVL2 2FA Pers.</div></div><div style="position:absolute;top:272.00px;line-height:14px;font-family:'Liberation Mono', monospace;font-size:11.9px;font-weight:normal;color:#9e9e9e;white-space:pre;transform:scaleX(0.9244);transform-origin:left 0;left:961px;">    S UE    SA</div><div style="position:absolute;top:291.00px;line-height:14px;font-family:'Liberation Sans', sans-serif;font-size:12px;font-weight:normal;color:#fff;white-space:pre;transform:scaleX(0.9889);transform-origin:right 0;right:1216px;">9</div><div style="position:absolute;left:228px;top:0;width:204px;height:759px;overflow:hidden"><div style="position:absolute;top:291.00px;line-height:14px;font-family:'Liberation Sans', sans-serif;font-size:12px;font-weight:normal;color:#b9b9b9;white-space:pre;transform:scaleX(0.9197);transform-origin:left 0;left:1px;">2FA Pers.</div></div><div style="position:absolute;left:433px;top:0;width:120px;height:759px;overflow:hidden"><div style="position:absolute;top:291.00px;line-height:14px;font-family:'Liberation Sans', sans-serif;font-size:12px;font-weight:normal;color:#b9b9b9;white-space:pre;transform:scaleX(0.9364);transform-origin:left 0;left:1px;">2FA Pers. Enbl. Test</div></div><div style="position:absolute;left:554px;top:0;width:65px;height:759px;overflow:hidden"><div style="position:absolute;top:291.00px;line-height:14px;font-family:'Liberation Sans', sans-serif;font-size:12px;font-weight:normal;color:#b9b9b9;white-space:pre;transform:scaleX(1.0185);transform-origin:left 0;left:1px;">Intellectual</div></div><div style="position:absolute;left:620px;top:0;width:204px;height:759px;overflow:hidden"><div style="position:absolute;top:291.00px;line-height:14px;font-family:'Liberation Sans', sans-serif;font-size:12px;font-weight:normal;color:#fff;white-space:pre;transform:scaleX(0.9459);transform-origin:left 0;left:1px;">ACG 4: Operator LVL2 2FA Pers. Enbl.</div></div><div style="position:absolute;top:290.00px;line-height:14px;font-family:'Liberation Mono', monospace;font-size:11.9px;font-weight:normal;color:#9e9e9e;white-space:pre;transform:scaleX(0.9244);transform-origin:left 0;left:961px;">         EU</div><div style="position:absolute;top:308.00px;line-height:14px;font-family:'Liberation Sans', sans-serif;font-size:12px;font-weight:normal;color:#fff;white-space:pre;transform:scaleX(0.9889);transform-origin:right 0;right:1216px;">10</div><div style="position:absolute;left:228px;top:0;width:204px;height:759px;overflow:hidden"><div style="position:absolute;top:308.00px;line-height:14px;font-family:'Liberation Sans', sans-serif;font-size:12px;font-weight:normal;color:#b9b9b9;white-space:pre;transform:scaleX(0.9821);transform-origin:left 0;left:1px;">Group Enabling, Code</div></div><div style="position:absolute;left:433px;top:0;width:120px;height:759px;overflow:hidden"><div style="position:absolute;top:308.00px;line-height:14px;font-family:'Liberation Sans', sans-serif;font-size:12px;font-weight:normal;color:#b9b9b9;white-space:pre;transform:scaleX(0.9632);transform-origin:left 0;left:1px;">2FA Group Enbl.</div></div><div style="position:absolute;left:554px;top:0;width:65px;height:759px;overflow:hidden"><div style="position:absolute;top:308.00px;line-height:14px;font-family:'Liberation Sans', sans-serif;font-size:12px;font-weight:normal;color:#b9b9b9;white-space:pre;transform:scaleX(1.0185);transform-origin:left 0;left:1px;">Intellectual</div></div><div style="position:absolute;left:620px;top:0;width:204px;height:759px;overflow:hidden"><div style="position:absolute;top:308.00px;line-height:14px;font-family:'Liberation Sans', sans-serif;font-size:12px;font-weight:normal;color:#fff;white-space:pre;transform:scaleX(0.9584);transform-origin:left 0;left:1px;">ACG 6: Operator LVL2 2FA Group Enbl.</div></div><div style="position:absolute;top:307.00px;line-height:14px;font-family:'Liberation Mono', monospace;font-size:11.9px;font-weight:normal;color:#9e9e9e;white-space:pre;transform:scaleX(0.9244);transform-origin:left 0;left:961px;">         EU</div><div style="position:absolute;top:326.00px;line-height:14px;font-family:'Liberation Sans', sans-serif;font-size:12px;font-weight:normal;color:#fff;white-space:pre;transform:scaleX(0.9889);transform-origin:right 0;right:1216px;">11</div><div style="position:absolute;left:228px;top:0;width:204px;height:759px;overflow:hidden"><div style="position:absolute;top:326.00px;line-height:14px;font-family:'Liberation Sans', sans-serif;font-size:12px;font-weight:normal;color:#b9b9b9;white-space:pre;transform:scaleX(0.9435);transform-origin:left 0;left:1px;">Test</div></div><div style="position:absolute;left:433px;top:0;width:120px;height:759px;overflow:hidden"><div style="position:absolute;top:326.00px;line-height:14px;font-family:'Liberation Sans', sans-serif;font-size:12px;font-weight:normal;color:#b9b9b9;white-space:pre;transform:scaleX(0.9551);transform-origin:left 0;left:1px;">Installer ALS</div></div><div style="position:absolute;left:554px;top:0;width:65px;height:759px;overflow:hidden"><div style="position:absolute;top:326.00px;line-height:14px;font-family:'Liberation Sans', sans-serif;font-size:12px;font-weight:normal;color:#b9b9b9;white-space:pre;transform:scaleX(1.0185);transform-origin:left 0;left:1px;">Intellectual</div></div><div style="position:absolute;left:620px;top:0;width:204px;height:759px;overflow:hidden"><div style="position:absolute;top:326.00px;line-height:14px;font-family:'Liberation Sans', sans-serif;font-size:12px;font-weight:normal;color:#fff;white-space:pre;transform:scaleX(0.9596);transform-origin:left 0;left:1px;">ACG 1: Installer</div></div><div style="position:absolute;top:326.00px;line-height:14px;font-family:'Liberation Mono', monospace;font-size:11.9px;font-weight:normal;color:#9e9e9e;white-space:pre;transform:scaleX(0.9244);transform-origin:left 0;left:826px;">AC  S US</div><div style="position:absolute;top:326.00px;line-height:14px;font-family:'Liberation Mono', monospace;font-size:11.9px;font-weight:normal;color:#9e9e9e;white-space:pre;transform:scaleX(0.9244);transform-origin:left 0;left:961px;">AC  S US</div><div style="position:absolute;top:326.00px;line-height:14px;font-family:'Liberation Mono', monospace;font-size:11.9px;font-weight:normal;color:#9e9e9e;white-space:pre;transform:scaleX(0.9244);transform-origin:left 0;left:1096px;">DM US IS ES FP</div><div style="position:absolute;top:326.00px;line-height:14px;font-family:'Liberation Mono', monospace;font-size:11.9px;font-weight:normal;color:#9e9e9e;white-space:pre;transform:scaleX(0.9244);transform-origin:left 0;left:1211px;">DM US IS ES FP</div><div style="position:absolute;top:326.00px;line-height:14px;font-family:'Liberation Mono', monospace;font-size:11.9px;font-weight:normal;color:#9e9e9e;white-space:pre;transform:scaleX(0.9244);transform-origin:left 0;left:1326px;">DM US IS ES FP</div><div style="position:absolute;top:344.00px;line-height:14px;font-family:'Liberation Sans', sans-serif;font-size:12px;font-weight:normal;color:#fff;white-space:pre;transform:scaleX(0.9889);transform-origin:right 0;right:1216px;">12</div><div style="position:absolute;left:228px;top:0;width:204px;height:759px;overflow:hidden"><div style="position:absolute;top:344.00px;line-height:14px;font-family:'Liberation Sans', sans-serif;font-size:12px;font-weight:normal;color:#b9b9b9;white-space:pre;transform:scaleX(0.9435);transform-origin:left 0;left:1px;">Test</div></div><div style="position:absolute;left:433px;top:0;width:120px;height:759px;overflow:hidden"><div style="position:absolute;top:344.00px;line-height:14px;font-family:'Liberation Sans', sans-serif;font-size:12px;font-weight:normal;color:#b9b9b9;white-space:pre;transform:scaleX(0.8831);transform-origin:left 0;left:1px;">LVL2 ALS</div></div><div style="position:absolute;left:554px;top:0;width:65px;height:759px;overflow:hidden"><div style="position:absolute;top:344.00px;line-height:14px;font-family:'Liberation Sans', sans-serif;font-size:12px;font-weight:normal;color:#b9b9b9;white-space:pre;transform:scaleX(1.0185);transform-origin:left 0;left:1px;">Intellectual</div></div><div style="position:absolute;left:620px;top:0;width:204px;height:759px;overflow:hidden"><div style="position:absolute;top:344.00px;line-height:14px;font-family:'Liberation Sans', sans-serif;font-size:12px;font-weight:normal;color:#fff;white-space:pre;transform:scaleX(0.9541);transform-origin:left 0;left:1px;">ACG 2: Operator LVL2</div></div><div style="position:absolute;top:343.00px;line-height:14px;font-family:'Liberation Mono', monospace;font-size:11.9px;font-weight:normal;color:#9e9e9e;white-space:pre;transform:scaleX(0.9244);transform-origin:left 0;left:826px;">AC  S US</div><div style="position:absolute;top:343.00px;line-height:14px;font-family:'Liberation Mono', monospace;font-size:11.9px;font-weight:normal;color:#9e9e9e;white-space:pre;transform:scaleX(0.9244);transform-origin:left 0;left:961px;">AC  S US</div><div style="position:absolute;top:343.00px;line-height:14px;font-family:'Liberation Mono', monospace;font-size:11.9px;font-weight:normal;color:#9e9e9e;white-space:pre;transform:scaleX(0.9244);transform-origin:left 0;left:1096px;">DM    IS ES FP</div><div style="position:absolute;top:343.00px;line-height:14px;font-family:'Liberation Mono', monospace;font-size:11.9px;font-weight:normal;color:#9e9e9e;white-space:pre;transform:scaleX(0.9244);transform-origin:left 0;left:1211px;">DM    IS ES FP</div><div style="position:absolute;top:343.00px;line-height:14px;font-family:'Liberation Mono', monospace;font-size:11.9px;font-weight:normal;color:#9e9e9e;white-space:pre;transform:scaleX(0.9244);transform-origin:left 0;left:1326px;">DM    IS ES FP</div><div style="position:absolute;top:362.00px;line-height:14px;font-family:'Liberation Sans', sans-serif;font-size:12px;font-weight:normal;color:#fff;white-space:pre;transform:scaleX(0.9889);transform-origin:right 0;right:1216px;">13</div><div style="position:absolute;left:228px;top:0;width:204px;height:759px;overflow:hidden"><div style="position:absolute;top:362.00px;line-height:14px;font-family:'Liberation Sans', sans-serif;font-size:12px;font-weight:normal;color:#b4bfcc;white-space:pre;transform:scaleX(0.9435);transform-origin:left 0;left:1px;">Test</div></div><div style="position:absolute;left:433px;top:0;width:120px;height:759px;overflow:hidden"><div style="position:absolute;top:362.00px;line-height:14px;font-family:'Liberation Sans', sans-serif;font-size:12px;font-weight:normal;color:#b4bfcc;white-space:pre;transform:scaleX(0.8978);transform-origin:left 0;left:1px;">T1 ALS</div></div><div style="position:absolute;left:554px;top:0;width:65px;height:759px;overflow:hidden"><div style="position:absolute;top:362.00px;line-height:14px;font-family:'Liberation Sans', sans-serif;font-size:12px;font-weight:normal;color:#b4bfcc;white-space:pre;transform:scaleX(1.0240);transform-origin:left 0;left:1px;">Material</div></div><div style="position:absolute;left:620px;top:0;width:204px;height:759px;overflow:hidden"><div style="position:absolute;top:362.00px;line-height:14px;font-family:'Liberation Sans', sans-serif;font-size:12px;font-weight:normal;color:#fff;white-space:pre;transform:scaleX(0.9541);transform-origin:left 0;left:1px;">ACG 2: Operator LVL2</div></div><div style="position:absolute;top:361.00px;line-height:14px;font-family:'Liberation Mono', monospace;font-size:11.9px;font-weight:normal;color:#a9b6c4;white-space:pre;transform:scaleX(0.9244);transform-origin:left 0;left:826px;">AC  S US</div><div style="position:absolute;top:361.00px;line-height:14px;font-family:'Liberation Mono', monospace;font-size:11.9px;font-weight:normal;color:#a9b6c4;white-space:pre;transform:scaleX(0.9244);transform-origin:left 0;left:961px;">AC  S US</div><div style="position:absolute;top:361.00px;line-height:14px;font-family:'Liberation Mono', monospace;font-size:11.9px;font-weight:normal;color:#a9b6c4;white-space:pre;transform:scaleX(0.9244);transform-origin:left 0;left:1096px;">DM    IS ES FP</div><div style="position:absolute;top:361.00px;line-height:14px;font-family:'Liberation Mono', monospace;font-size:11.9px;font-weight:normal;color:#a9b6c4;white-space:pre;transform:scaleX(0.9244);transform-origin:left 0;left:1211px;">DM    IS ES FP</div><div style="position:absolute;top:361.00px;line-height:14px;font-family:'Liberation Mono', monospace;font-size:11.9px;font-weight:normal;color:#a9b6c4;white-space:pre;transform:scaleX(0.9244);transform-origin:left 0;left:1326px;">DM    IS ES FP</div><div style="position:absolute;left:197px;top:416px;width:1242px;height:1px;background:#5a5a5a;"></div><div style="position:absolute;top:438.00px;line-height:17px;font-family:'Liberation Sans', sans-serif;font-size:15.2px;font-weight:bold;color:#fff;white-space:pre;transform:scaleX(0.9951);transform-origin:left 0;left:211px;">Code authorizations for AZ 2: Keypad Readers</div><div style="position:absolute;left:558px;top:430px;width:120px;height:31px;background:#434343;"></div><div style="position:absolute;top:439.00px;line-height:15px;font-family:'Liberation Sans', sans-serif;font-size:13.2px;font-weight:bold;color:#fff;white-space:pre;transform:scaleX(1.0550);transform-origin:left 0;left:598px;">Delete</div><div style="position:absolute;top:431.00px;line-height:14px;font-family:'Liberation Sans', sans-serif;font-size:12px;font-weight:normal;color:#fff;white-space:pre;transform:scaleX(1.0222);transform-origin:left 0;left:696px;">Authorization code group:</div><div style="position:absolute;top:431.00px;line-height:14px;font-family:'Liberation Sans', sans-serif;font-size:12px;font-weight:normal;color:#fff;white-space:pre;transform:scaleX(0.9317);transform-origin:left 0;left:838px;"><span style="color:#3794ff;text-decoration:underline;text-decoration-skip-ink:none;text-underline-offset:1px">ACG 4: Operator LVL2 2FA Pers. Enbl.</span></div><div style="position:absolute;left:197px;top:469px;width:1242px;height:1px;background:#2d7dd2;"></div><div style="position:absolute;left:207px;top:480px;width:1143px;height:219px;background:#c3c3c3;"></div><div style="position:absolute;left:208px;top:481px;width:1141px;height:36px;background:#434343;"></div><div style="position:absolute;left:208px;top:518px;width:1141px;height:180px;background:#2f2f2f;"></div><div style="position:absolute;left:227px;top:481px;width:1px;height:217px;background:#c3c3c3;"></div><div style="position:absolute;left:347px;top:481px;width:1px;height:217px;background:#c3c3c3;"></div><div style="position:absolute;left:415px;top:481px;width:1px;height:217px;background:#c3c3c3;"></div><div style="position:absolute;left:486px;top:481px;width:1px;height:217px;background:#c3c3c3;"></div><div style="position:absolute;left:759px;top:481px;width:1px;height:217px;background:#c3c3c3;"></div><div style="position:absolute;left:860px;top:481px;width:1px;height:217px;background:#c3c3c3;"></div><div style="position:absolute;left:938px;top:481px;width:1px;height:217px;background:#c3c3c3;"></div><div style="position:absolute;left:1017px;top:481px;width:1px;height:217px;background:#c3c3c3;"></div><div style="position:absolute;left:1181px;top:481px;width:1px;height:217px;background:#c3c3c3;"></div><div style="position:absolute;left:1243px;top:481px;width:1px;height:217px;background:#c3c3c3;"></div><svg style="position:absolute;left:208px;top:481px" width="19" height="36"><path d="M18 25 L18 35 L8 35 Z" fill="#c8c8c8"/></svg><div style="position:absolute;top:485.00px;line-height:14px;font-family:'Liberation Sans', sans-serif;font-size:12px;font-weight:normal;color:#fff;white-space:pre;transform:scaleX(1.0362);transform-origin:left 0;left:234px;">Authorization</div><div style="position:absolute;top:501.00px;line-height:14px;font-family:'Liberation Sans', sans-serif;font-size:12px;font-weight:normal;color:#fff;white-space:pre;transform:scaleX(1.0133);transform-origin:left 0;left:234px;">procedure</div><div style="position:absolute;top:485.00px;line-height:14px;font-family:'Liberation Sans', sans-serif;font-size:12px;font-weight:normal;color:#fff;white-space:pre;transform:scaleX(1.0141);transform-origin:left 0;left:354px;">Supported</div><div style="position:absolute;top:501.00px;line-height:14px;font-family:'Liberation Sans', sans-serif;font-size:12px;font-weight:normal;color:#fff;white-space:pre;transform:scaleX(1.0207);transform-origin:left 0;left:354px;">by</div><div style="position:absolute;top:501.00px;line-height:14px;font-family:'Liberation Sans', sans-serif;font-size:12px;font-weight:normal;color:#fff;white-space:pre;transform:scaleX(0.9898);transform-origin:left 0;left:422px;">User action</div><div style="position:absolute;top:501.00px;line-height:14px;font-family:'Liberation Sans', sans-serif;font-size:12px;font-weight:normal;color:#fff;white-space:pre;transform:scaleX(0.9770);transform-origin:left 0;left:493px;">Reaction</div><div style="position:absolute;top:485.00px;line-height:14px;font-family:'Liberation Sans', sans-serif;font-size:12px;font-weight:normal;color:#fff;white-space:pre;transform:scaleX(1.0480);transform-origin:left 0;left:766px;"><span style="color:#3794ff;text-decoration:underline;text-decoration-skip-ink:none;text-underline-offset:1px">Partition</span> /</div><div style="position:absolute;top:501.00px;line-height:14px;font-family:'Liberation Sans', sans-serif;font-size:12px;font-weight:normal;color:#fff;white-space:pre;transform:scaleX(1.0368);transform-origin:left 0;left:766px;"><span style="color:#3794ff;text-decoration:underline;text-decoration-skip-ink:none;text-underline-offset:1px">Partition group</span></div><div style="position:absolute;top:501.00px;line-height:14px;font-family:'Liberation Sans', sans-serif;font-size:12px;font-weight:normal;color:#fff;white-space:pre;transform:scaleX(1.0091);transform-origin:left 0;left:867px;"><span style="color:#3794ff;text-decoration:underline;text-decoration-skip-ink:none;text-underline-offset:1px">Time model</span></div><div style="position:absolute;top:501.00px;line-height:14px;font-family:'Liberation Sans', sans-serif;font-size:12px;font-weight:normal;color:#fff;white-space:pre;transform:scaleX(1.0519);transform-origin:left 0;left:945px;"><span style="color:#3794ff;text-decoration:underline;text-decoration-skip-ink:none;text-underline-offset:1px">Input group</span></div><div style="position:absolute;top:501.00px;line-height:14px;font-family:'Liberation Sans', sans-serif;font-size:12px;font-weight:normal;color:#fff;white-space:pre;transform:scaleX(1.0057);transform-origin:left 0;left:1024px;"><span style="color:#3794ff;text-decoration:underline;text-decoration-skip-ink:none;text-underline-offset:1px">Switching action</span></div><div style="position:absolute;top:485.00px;line-height:14px;font-family:'Liberation Sans', sans-serif;font-size:12px;font-weight:normal;color:#fff;white-space:pre;transform:scaleX(0.9773);transform-origin:left 0;left:1188px;">SA action</div><div style="position:absolute;top:485.00px;line-height:14px;font-family:'Liberation Sans', sans-serif;font-size:12px;font-weight:normal;color:#fff;white-space:pre;left:1250px;">SA pulse duration</div><div style="position:absolute;top:501.00px;line-height:14px;font-family:'Liberation Sans', sans-serif;font-size:12px;font-weight:normal;color:#fff;white-space:pre;transform:scaleX(1.0089);transform-origin:left 0;left:1250px;">[min:s]</div><div style="position:absolute;left:228px;top:0;width:119px;height:759px;overflow:hidden"><div style="position:absolute;top:521.00px;line-height:14px;font-family:'Liberation Sans', sans-serif;font-size:12px;font-weight:normal;color:#b9b9b9;white-space:pre;transform:scaleX(0.9668);transform-origin:left 0;left:1px;">Access when unset</div></div><div style="position:absolute;top:520.00px;line-height:13px;font-family:'Liberation Mono', monospace;font-size:11.5px;font-weight:normal;color:#b0b0b0;white-space:pre;transform:scaleX(0.9565);transform-origin:left 0;left:349px;">RD</div><div style="position:absolute;left:416px;top:0;width:70px;height:759px;overflow:hidden"><div style="position:absolute;top:521.00px;line-height:14px;font-family:'Liberation Sans', sans-serif;font-size:12px;font-weight:normal;color:#b9b9b9;white-space:pre;transform:scaleX(1.0184);transform-origin:left 0;left:1px;">Not possible</div></div><div style="position:absolute;left:487px;top:0;width:272px;height:759px;overflow:hidden"><div style="position:absolute;top:521.00px;line-height:14px;font-family:'Liberation Sans', sans-serif;font-size:12px;font-weight:normal;color:#fff;white-space:pre;transform:scaleX(1.0207);transform-origin:left 0;left:1px;">None</div></div><div style="position:absolute;top:521.00px;line-height:14px;font-family:'Liberation Sans', sans-serif;font-size:12px;font-weight:normal;color:#adadad;white-space:pre;transform:scaleX(1.1862);transform-origin:left 0;left:761px;">---</div><div style="position:absolute;top:521.00px;line-height:14px;font-family:'Liberation Sans', sans-serif;font-size:12px;font-weight:normal;color:#adadad;white-space:pre;transform:scaleX(1.1862);transform-origin:left 0;left:862px;">---</div><div style="position:absolute;top:521.00px;line-height:14px;font-family:'Liberation Sans', sans-serif;font-size:12px;font-weight:normal;color:#adadad;white-space:pre;transform:scaleX(1.1862);transform-origin:left 0;left:940px;">---</div><div style="position:absolute;top:521.00px;line-height:14px;font-family:'Liberation Sans', sans-serif;font-size:12px;font-weight:normal;color:#adadad;white-space:pre;transform:scaleX(1.1862);transform-origin:left 0;left:1019px;">---</div><div style="position:absolute;top:521.00px;line-height:14px;font-family:'Liberation Sans', sans-serif;font-size:12px;font-weight:normal;color:#adadad;white-space:pre;transform:scaleX(1.1862);transform-origin:left 0;left:1183px;">---</div><div style="position:absolute;left:228px;top:0;width:119px;height:759px;overflow:hidden"><div style="position:absolute;top:539.00px;line-height:14px;font-family:'Liberation Sans', sans-serif;font-size:12px;font-weight:normal;color:#b9b9b9;white-space:pre;transform:scaleX(0.9287);transform-origin:left 0;left:1px;">Set</div></div><div style="position:absolute;top:538.00px;line-height:13px;font-family:'Liberation Mono', monospace;font-size:11.5px;font-weight:normal;color:#b0b0b0;white-space:pre;transform:scaleX(0.9565);transform-origin:left 0;left:349px;">RD</div><div style="position:absolute;left:416px;top:0;width:70px;height:759px;overflow:hidden"><div style="position:absolute;top:539.00px;line-height:14px;font-family:'Liberation Sans', sans-serif;font-size:12px;font-weight:normal;color:#b9b9b9;white-space:pre;transform:scaleX(1.0184);transform-origin:left 0;left:1px;">Not possible</div></div><div style="position:absolute;left:487px;top:0;width:272px;height:759px;overflow:hidden"><div style="position:absolute;top:539.00px;line-height:14px;font-family:'Liberation Sans', sans-serif;font-size:12px;font-weight:normal;color:#fff;white-space:pre;transform:scaleX(1.0207);transform-origin:left 0;left:1px;">None</div></div><div style="position:absolute;top:539.00px;line-height:14px;font-family:'Liberation Sans', sans-serif;font-size:12px;font-weight:normal;color:#adadad;white-space:pre;transform:scaleX(1.1862);transform-origin:left 0;left:761px;">---</div><div style="position:absolute;top:539.00px;line-height:14px;font-family:'Liberation Sans', sans-serif;font-size:12px;font-weight:normal;color:#adadad;white-space:pre;transform:scaleX(1.1862);transform-origin:left 0;left:862px;">---</div><div style="position:absolute;top:539.00px;line-height:14px;font-family:'Liberation Sans', sans-serif;font-size:12px;font-weight:normal;color:#adadad;white-space:pre;transform:scaleX(1.1862);transform-origin:left 0;left:940px;">---</div><div style="position:absolute;top:539.00px;line-height:14px;font-family:'Liberation Sans', sans-serif;font-size:12px;font-weight:normal;color:#adadad;white-space:pre;transform:scaleX(1.1862);transform-origin:left 0;left:1019px;">---</div><div style="position:absolute;top:539.00px;line-height:14px;font-family:'Liberation Sans', sans-serif;font-size:12px;font-weight:normal;color:#adadad;white-space:pre;transform:scaleX(1.1862);transform-origin:left 0;left:1183px;">---</div><div style="position:absolute;left:228px;top:0;width:119px;height:759px;overflow:hidden"><div style="position:absolute;top:557.00px;line-height:14px;font-family:'Liberation Sans', sans-serif;font-size:12px;font-weight:normal;color:#b9b9b9;white-space:pre;transform:scaleX(0.9804);transform-origin:left 0;left:1px;">Unset</div></div><div style="position:absolute;top:556.00px;line-height:13px;font-family:'Liberation Mono', monospace;font-size:11.5px;font-weight:normal;color:#b0b0b0;white-space:pre;transform:scaleX(0.9565);transform-origin:left 0;left:349px;">RD TM2</div><div style="position:absolute;left:416px;top:0;width:70px;height:759px;overflow:hidden"><div style="position:absolute;top:557.00px;line-height:14px;font-family:'Liberation Sans', sans-serif;font-size:12px;font-weight:normal;color:#b9b9b9;white-space:pre;transform:scaleX(1.0184);transform-origin:left 0;left:1px;">Not possible</div></div><div style="position:absolute;left:487px;top:0;width:272px;height:759px;overflow:hidden"><div style="position:absolute;top:557.00px;line-height:14px;font-family:'Liberation Sans', sans-serif;font-size:12px;font-weight:normal;color:#fff;white-space:pre;transform:scaleX(1.0207);transform-origin:left 0;left:1px;">None</div></div><div style="position:absolute;top:557.00px;line-height:14px;font-family:'Liberation Sans', sans-serif;font-size:12px;font-weight:normal;color:#adadad;white-space:pre;transform:scaleX(1.1862);transform-origin:left 0;left:761px;">---</div><div style="position:absolute;top:557.00px;line-height:14px;font-family:'Liberation Sans', sans-serif;font-size:12px;font-weight:normal;color:#adadad;white-space:pre;transform:scaleX(1.1862);transform-origin:left 0;left:862px;">---</div><div style="position:absolute;top:557.00px;line-height:14px;font-family:'Liberation Sans', sans-serif;font-size:12px;font-weight:normal;color:#adadad;white-space:pre;transform:scaleX(1.1862);transform-origin:left 0;left:940px;">---</div><div style="position:absolute;top:557.00px;line-height:14px;font-family:'Liberation Sans', sans-serif;font-size:12px;font-weight:normal;color:#adadad;white-space:pre;transform:scaleX(1.1862);transform-origin:left 0;left:1019px;">---</div><div style="position:absolute;top:557.00px;line-height:14px;font-family:'Liberation Sans', sans-serif;font-size:12px;font-weight:normal;color:#adadad;white-space:pre;transform:scaleX(1.1862);transform-origin:left 0;left:1183px;">---</div><div style="position:absolute;left:228px;top:0;width:119px;height:759px;overflow:hidden"><div style="position:absolute;top:575.00px;line-height:14px;font-family:'Liberation Sans', sans-serif;font-size:12px;font-weight:normal;color:#b9b9b9;white-space:pre;transform:scaleX(1.0173);transform-origin:left 0;left:1px;">Enabling for unsetting</div></div><div style="position:absolute;top:574.00px;line-height:13px;font-family:'Liberation Mono', monospace;font-size:11.5px;font-weight:normal;color:#b0b0b0;white-space:pre;transform:scaleX(0.9565);transform-origin:left 0;left:349px;">RD TM2</div><div style="position:absolute;left:416px;top:0;width:70px;height:759px;overflow:hidden"><div style="position:absolute;top:575.00px;line-height:14px;font-family:'Liberation Sans', sans-serif;font-size:12px;font-weight:normal;color:#b9b9b9;white-space:pre;transform:scaleX(1.0418);transform-origin:left 0;left:1px;">Brief/long</div></div><div style="position:absolute;left:487px;top:0;width:272px;height:759px;overflow:hidden"><div style="position:absolute;top:575.00px;line-height:14px;font-family:'Liberation Sans', sans-serif;font-size:12px;font-weight:normal;color:#fff;white-space:pre;transform:scaleX(1.0141);transform-origin:left 0;left:1px;">Enabling for unsetting with personal enabling code</div></div><div style="position:absolute;top:575.00px;line-height:14px;font-family:'Liberation Sans', sans-serif;font-size:12px;font-weight:normal;color:#adadad;white-space:pre;transform:scaleX(1.1862);transform-origin:left 0;left:761px;">---</div><div style="position:absolute;top:575.00px;line-height:14px;font-family:'Liberation Sans', sans-serif;font-size:12px;font-weight:normal;color:#adadad;white-space:pre;transform:scaleX(1.1862);transform-origin:left 0;left:862px;">---</div><div style="position:absolute;top:575.00px;line-height:14px;font-family:'Liberation Sans', sans-serif;font-size:12px;font-weight:normal;color:#adadad;white-space:pre;transform:scaleX(1.1862);transform-origin:left 0;left:940px;">---</div><div style="position:absolute;top:575.00px;line-height:14px;font-family:'Liberation Sans', sans-serif;font-size:12px;font-weight:normal;color:#adadad;white-space:pre;transform:scaleX(1.1862);transform-origin:left 0;left:1019px;">---</div><div style="position:absolute;top:575.00px;line-height:14px;font-family:'Liberation Sans', sans-serif;font-size:12px;font-weight:normal;color:#adadad;white-space:pre;transform:scaleX(1.1862);transform-origin:left 0;left:1183px;">---</div><div style="position:absolute;left:228px;top:0;width:119px;height:759px;overflow:hidden"><div style="position:absolute;top:593.00px;line-height:14px;font-family:'Liberation Sans', sans-serif;font-size:12px;font-weight:normal;color:#b9b9b9;white-space:pre;transform:scaleX(1.0057);transform-origin:left 0;left:1px;">Switching action</div></div><div style="position:absolute;top:592.00px;line-height:13px;font-family:'Liberation Mono', monospace;font-size:11.5px;font-weight:normal;color:#b0b0b0;white-space:pre;transform:scaleX(0.9565);transform-origin:left 0;left:349px;">RD TM2</div><div style="position:absolute;left:416px;top:0;width:70px;height:759px;overflow:hidden"><div style="position:absolute;top:593.00px;line-height:14px;font-family:'Liberation Sans', sans-serif;font-size:12px;font-weight:normal;color:#b9b9b9;white-space:pre;transform:scaleX(0.9829);transform-origin:left 0;left:1px;">Brief</div></div><div style="position:absolute;left:487px;top:0;width:272px;height:759px;overflow:hidden"><div style="position:absolute;top:593.00px;line-height:14px;font-family:'Liberation Sans', sans-serif;font-size:12px;font-weight:normal;color:#fff;white-space:pre;transform:scaleX(1.0207);transform-origin:left 0;left:1px;">None</div></div><div style="position:absolute;top:593.00px;line-height:14px;font-family:'Liberation Sans', sans-serif;font-size:12px;font-weight:normal;color:#adadad;white-space:pre;transform:scaleX(1.1862);transform-origin:left 0;left:761px;">---</div><div style="position:absolute;top:593.00px;line-height:14px;font-family:'Liberation Sans', sans-serif;font-size:12px;font-weight:normal;color:#adadad;white-space:pre;transform:scaleX(1.1862);transform-origin:left 0;left:862px;">---</div><div style="position:absolute;top:593.00px;line-height:14px;font-family:'Liberation Sans', sans-serif;font-size:12px;font-weight:normal;color:#adadad;white-space:pre;transform:scaleX(1.1862);transform-origin:left 0;left:940px;">---</div><div style="position:absolute;top:593.00px;line-height:14px;font-family:'Liberation Sans', sans-serif;font-size:12px;font-weight:normal;color:#adadad;white-space:pre;transform:scaleX(1.1862);transform-origin:left 0;left:1019px;">---</div><div style="position:absolute;top:593.00px;line-height:14px;font-family:'Liberation Sans', sans-serif;font-size:12px;font-weight:normal;color:#adadad;white-space:pre;transform:scaleX(1.1862);transform-origin:left 0;left:1183px;">---</div><div style="position:absolute;left:228px;top:0;width:119px;height:759px;overflow:hidden"><div style="position:absolute;top:611.00px;line-height:14px;font-family:'Liberation Sans', sans-serif;font-size:12px;font-weight:normal;color:#b9b9b9;white-space:pre;transform:scaleX(1.0057);transform-origin:left 0;left:1px;">Switching action</div></div><div style="position:absolute;top:610.00px;line-height:13px;font-family:'Liberation Mono', monospace;font-size:11.5px;font-weight:normal;color:#b0b0b0;white-space:pre;transform:scaleX(0.9565);transform-origin:left 0;left:349px;">RD TM2</div><div style="position:absolute;left:416px;top:0;width:70px;height:759px;overflow:hidden"><div style="position:absolute;top:611.00px;line-height:14px;font-family:'Liberation Sans', sans-serif;font-size:12px;font-weight:normal;color:#b9b9b9;white-space:pre;transform:scaleX(0.9934);transform-origin:left 0;left:1px;">Long</div></div><div style="position:absolute;left:487px;top:0;width:272px;height:759px;overflow:hidden"><div style="position:absolute;top:611.00px;line-height:14px;font-family:'Liberation Sans', sans-serif;font-size:12px;font-weight:normal;color:#fff;white-space:pre;transform:scaleX(1.0207);transform-origin:left 0;left:1px;">None</div></div><div style="position:absolute;top:611.00px;line-height:14px;font-family:'Liberation Sans', sans-serif;font-size:12px;font-weight:normal;color:#adadad;white-space:pre;transform:scaleX(1.1862);transform-origin:left 0;left:761px;">---</div><div style="position:absolute;top:611.00px;line-height:14px;font-family:'Liberation Sans', sans-serif;font-size:12px;font-weight:normal;color:#adadad;white-space:pre;transform:scaleX(1.1862);transform-origin:left 0;left:862px;">---</div><div style="position:absolute;top:611.00px;line-height:14px;font-family:'Liberation Sans', sans-serif;font-size:12px;font-weight:normal;color:#adadad;white-space:pre;transform:scaleX(1.1862);transform-origin:left 0;left:940px;">---</div><div style="position:absolute;top:611.00px;line-height:14px;font-family:'Liberation Sans', sans-serif;font-size:12px;font-weight:normal;color:#adadad;white-space:pre;transform:scaleX(1.1862);transform-origin:left 0;left:1019px;">---</div><div style="position:absolute;top:611.00px;line-height:14px;font-family:'Liberation Sans', sans-serif;font-size:12px;font-weight:normal;color:#adadad;white-space:pre;transform:scaleX(1.1862);transform-origin:left 0;left:1183px;">---</div><div style="position:absolute;left:228px;top:0;width:119px;height:759px;overflow:hidden"><div style="position:absolute;top:629.00px;line-height:14px;font-family:'Liberation Sans', sans-serif;font-size:12px;font-weight:normal;color:#b9b9b9;white-space:pre;transform:scaleX(1.0118);transform-origin:left 0;left:1px;">Control function RD</div></div><div style="position:absolute;top:628.00px;line-height:13px;font-family:'Liberation Mono', monospace;font-size:11.5px;font-weight:normal;color:#b0b0b0;white-space:pre;transform:scaleX(0.9565);transform-origin:left 0;left:349px;">RD</div><div style="position:absolute;left:416px;top:0;width:70px;height:759px;overflow:hidden"><div style="position:absolute;top:629.00px;line-height:14px;font-family:'Liberation Sans', sans-serif;font-size:12px;font-weight:normal;color:#b9b9b9;white-space:pre;transform:scaleX(0.9829);transform-origin:left 0;left:1px;">Brief</div></div><div style="position:absolute;left:487px;top:0;width:272px;height:759px;overflow:hidden"><div style="position:absolute;top:629.00px;line-height:14px;font-family:'Liberation Sans', sans-serif;font-size:12px;font-weight:normal;color:#fff;white-space:pre;transform:scaleX(1.0207);transform-origin:left 0;left:1px;">None</div></div><div style="position:absolute;top:629.00px;line-height:14px;font-family:'Liberation Sans', sans-serif;font-size:12px;font-weight:normal;color:#adadad;white-space:pre;transform:scaleX(1.1862);transform-origin:left 0;left:761px;">---</div><div style="position:absolute;top:629.00px;line-height:14px;font-family:'Liberation Sans', sans-serif;font-size:12px;font-weight:normal;color:#adadad;white-space:pre;transform:scaleX(1.1862);transform-origin:left 0;left:862px;">---</div><div style="position:absolute;top:629.00px;line-height:14px;font-family:'Liberation Sans', sans-serif;font-size:12px;font-weight:normal;color:#adadad;white-space:pre;transform:scaleX(1.1862);transform-origin:left 0;left:940px;">---</div><div style="position:absolute;top:629.00px;line-height:14px;font-family:'Liberation Sans', sans-serif;font-size:12px;font-weight:normal;color:#adadad;white-space:pre;transform:scaleX(1.1862);transform-origin:left 0;left:1019px;">---</div><div style="position:absolute;top:629.00px;line-height:14px;font-family:'Liberation Sans', sans-serif;font-size:12px;font-weight:normal;color:#adadad;white-space:pre;transform:scaleX(1.1862);transform-origin:left 0;left:1183px;">---</div><div style="position:absolute;left:228px;top:0;width:119px;height:759px;overflow:hidden"><div style="position:absolute;top:647.00px;line-height:14px;font-family:'Liberation Sans', sans-serif;font-size:12px;font-weight:normal;color:#b9b9b9;white-space:pre;transform:scaleX(1.0118);transform-origin:left 0;left:1px;">Control function RD</div></div><div style="position:absolute;top:646.00px;line-height:13px;font-family:'Liberation Mono', monospace;font-size:11.5px;font-weight:normal;color:#b0b0b0;white-space:pre;transform:scaleX(0.9565);transform-origin:left 0;left:349px;">RD</div><div style="position:absolute;left:416px;top:0;width:70px;height:759px;overflow:hidden"><div style="position:absolute;top:647.00px;line-height:14px;font-family:'Liberation Sans', sans-serif;font-size:12px;font-weight:normal;color:#b9b9b9;white-space:pre;transform:scaleX(0.9934);transform-origin:left 0;left:1px;">Long</div></div><div style="position:absolute;left:487px;top:0;width:272px;height:759px;overflow:hidden"><div style="position:absolute;top:647.00px;line-height:14px;font-family:'Liberation Sans', sans-serif;font-size:12px;font-weight:normal;color:#fff;white-space:pre;transform:scaleX(1.0207);transform-origin:left 0;left:1px;">None</div></div><div style="position:absolute;top:647.00px;line-height:14px;font-family:'Liberation Sans', sans-serif;font-size:12px;font-weight:normal;color:#adadad;white-space:pre;transform:scaleX(1.1862);transform-origin:left 0;left:761px;">---</div><div style="position:absolute;top:647.00px;line-height:14px;font-family:'Liberation Sans', sans-serif;font-size:12px;font-weight:normal;color:#adadad;white-space:pre;transform:scaleX(1.1862);transform-origin:left 0;left:862px;">---</div><div style="position:absolute;top:647.00px;line-height:14px;font-family:'Liberation Sans', sans-serif;font-size:12px;font-weight:normal;color:#adadad;white-space:pre;transform:scaleX(1.1862);transform-origin:left 0;left:940px;">---</div><div style="position:absolute;top:647.00px;line-height:14px;font-family:'Liberation Sans', sans-serif;font-size:12px;font-weight:normal;color:#adadad;white-space:pre;transform:scaleX(1.1862);transform-origin:left 0;left:1019px;">---</div><div style="position:absolute;top:647.00px;line-height:14px;font-family:'Liberation Sans', sans-serif;font-size:12px;font-weight:normal;color:#adadad;white-space:pre;transform:scaleX(1.1862);transform-origin:left 0;left:1183px;">---</div><div style="position:absolute;left:228px;top:0;width:119px;height:759px;overflow:hidden"><div style="position:absolute;top:665.00px;line-height:14px;font-family:'Liberation Sans', sans-serif;font-size:12px;font-weight:normal;color:#b9b9b9;white-space:pre;transform:scaleX(1.0286);transform-origin:left 0;left:1px;">Control function DAM</div></div><div style="position:absolute;top:664.00px;line-height:13px;font-family:'Liberation Mono', monospace;font-size:11.5px;font-weight:normal;color:#b0b0b0;white-space:pre;transform:scaleX(0.9565);transform-origin:left 0;left:349px;">   TM2</div><div style="position:absolute;left:416px;top:0;width:70px;height:759px;overflow:hidden"><div style="position:absolute;top:665.00px;line-height:14px;font-family:'Liberation Sans', sans-serif;font-size:12px;font-weight:normal;color:#b9b9b9;white-space:pre;transform:scaleX(1.0184);transform-origin:left 0;left:1px;">Not possible</div></div><div style="position:absolute;left:487px;top:0;width:272px;height:759px;overflow:hidden"><div style="position:absolute;top:665.00px;line-height:14px;font-family:'Liberation Sans', sans-serif;font-size:12px;font-weight:normal;color:#fff;white-space:pre;transform:scaleX(1.0207);transform-origin:left 0;left:1px;">None</div></div><div style="position:absolute;top:665.00px;line-height:14px;font-family:'Liberation Sans', sans-serif;font-size:12px;font-weight:normal;color:#adadad;white-space:pre;transform:scaleX(1.1862);transform-origin:left 0;left:761px;">---</div><div style="position:absolute;top:665.00px;line-height:14px;font-family:'Liberation Sans', sans-serif;font-size:12px;font-weight:normal;color:#adadad;white-space:pre;transform:scaleX(1.1862);transform-origin:left 0;left:862px;">---</div><div style="position:absolute;top:665.00px;line-height:14px;font-family:'Liberation Sans', sans-serif;font-size:12px;font-weight:normal;color:#adadad;white-space:pre;transform:scaleX(1.1862);transform-origin:left 0;left:940px;">---</div><div style="position:absolute;top:665.00px;line-height:14px;font-family:'Liberation Sans', sans-serif;font-size:12px;font-weight:normal;color:#adadad;white-space:pre;transform:scaleX(1.1862);transform-origin:left 0;left:1019px;">---</div><div style="position:absolute;top:665.00px;line-height:14px;font-family:'Liberation Sans', sans-serif;font-size:12px;font-weight:normal;color:#adadad;white-space:pre;transform:scaleX(1.1862);transform-origin:left 0;left:1183px;">---</div><div style="position:absolute;left:228px;top:0;width:119px;height:759px;overflow:hidden"><div style="position:absolute;top:683.00px;line-height:14px;font-family:'Liberation Sans', sans-serif;font-size:12px;font-weight:normal;color:#b9b9b9;white-space:pre;transform:scaleX(1.0286);transform-origin:left 0;left:1px;">Control function DAM</div></div><div style="position:absolute;top:682.00px;line-height:13px;font-family:'Liberation Mono', monospace;font-size:11.5px;font-weight:normal;color:#b0b0b0;white-space:pre;transform:scaleX(0.9565);transform-origin:left 0;left:349px;">   TM2</div><div style="position:absolute;left:416px;top:0;width:70px;height:759px;overflow:hidden"><div style="position:absolute;top:683.00px;line-height:14px;font-family:'Liberation Sans', sans-serif;font-size:12px;font-weight:normal;color:#b9b9b9;white-space:pre;transform:scaleX(1.0184);transform-origin:left 0;left:1px;">Not possible</div></div><div style="position:absolute;left:487px;top:0;width:272px;height:759px;overflow:hidden"><div style="position:absolute;top:683.00px;line-height:14px;font-family:'Liberation Sans', sans-serif;font-size:12px;font-weight:normal;color:#fff;white-space:pre;transform:scaleX(1.0207);transform-origin:left 0;left:1px;">None</div></div><div style="position:absolute;top:683.00px;line-height:14px;font-family:'Liberation Sans', sans-serif;font-size:12px;font-weight:normal;color:#adadad;white-space:pre;transform:scaleX(1.1862);transform-origin:left 0;left:761px;">---</div><div style="position:absolute;top:683.00px;line-height:14px;font-family:'Liberation Sans', sans-serif;font-size:12px;font-weight:normal;color:#adadad;white-space:pre;transform:scaleX(1.1862);transform-origin:left 0;left:862px;">---</div><div style="position:absolute;top:683.00px;line-height:14px;font-family:'Liberation Sans', sans-serif;font-size:12px;font-weight:normal;color:#adadad;white-space:pre;transform:scaleX(1.1862);transform-origin:left 0;left:940px;">---</div><div style="position:absolute;top:683.00px;line-height:14px;font-family:'Liberation Sans', sans-serif;font-size:12px;font-weight:normal;color:#adadad;white-space:pre;transform:scaleX(1.1862);transform-origin:left 0;left:1019px;">---</div><div style="position:absolute;top:683.00px;line-height:14px;font-family:'Liberation Sans', sans-serif;font-size:12px;font-weight:normal;color:#adadad;white-space:pre;transform:scaleX(1.1862);transform-origin:left 0;left:1183px;">---</div>
</body></html>
